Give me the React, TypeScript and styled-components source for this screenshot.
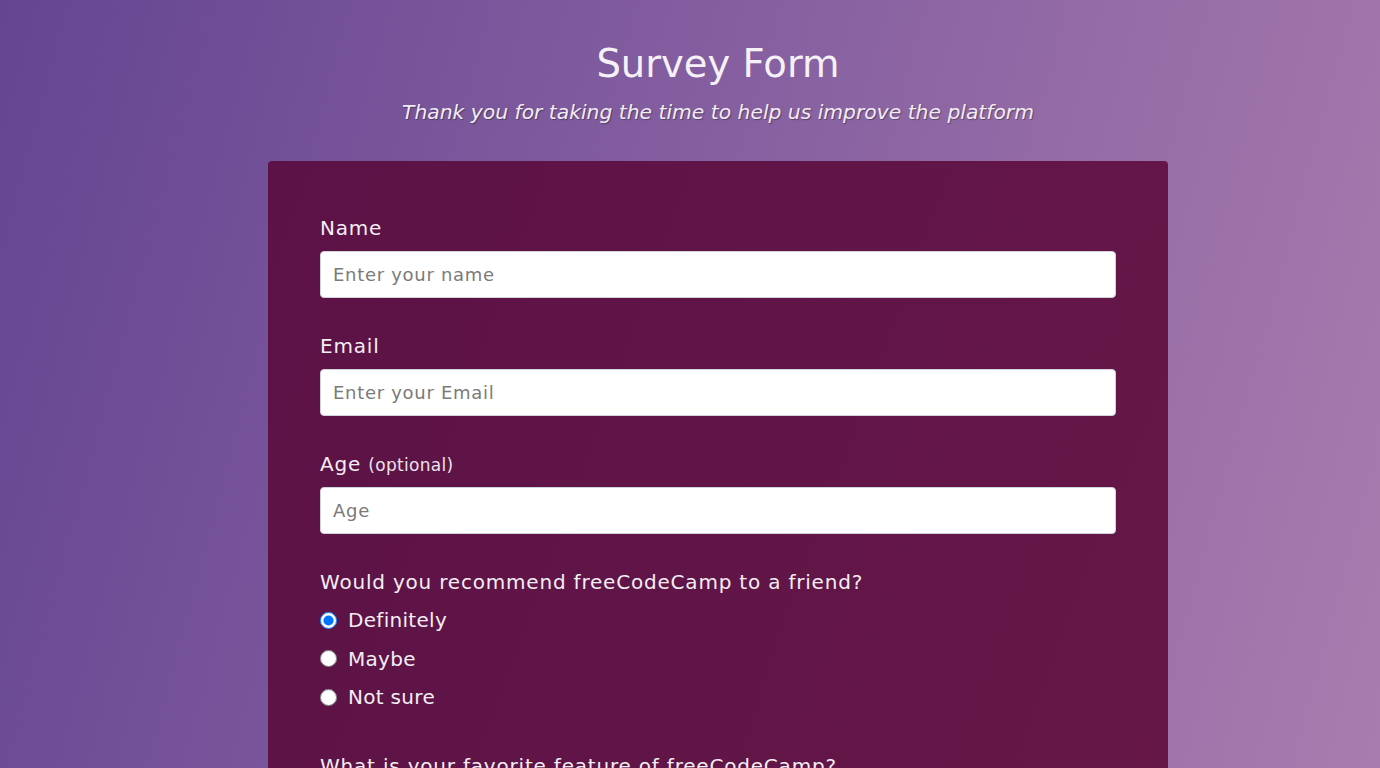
import styled, { createGlobalStyle } from 'styled-components';

const GlobalStyle = createGlobalStyle`
  html, body {
    margin: 0;
    padding: 0;
  }
  body {
    font-family: 'DejaVu Sans', 'Noto Sans', sans-serif;
    color: #f3f3f3;
    min-height: 100vh;
    background: linear-gradient(105deg, #654592 0%, #8a63a2 55%, #a97cae 100%);
    background-attachment: fixed;
  }
  * {
    box-sizing: border-box;
  }
`;

const Page = styled.main`
  display: flex;
  flex-direction: column;
  align-items: center;
  padding: 40px 0 40px 56px;
`;

const Header = styled.header`
  display: flex;
  flex-direction: column;
  align-items: center;
  margin-bottom: 37px;
`;

const Title = styled.h1`
  margin: 0;
  font-size: 38.5px;
  font-weight: 400;
  line-height: 48px;
  color: #f5f1f7;
`;

const Description = styled.p`
  margin: 12px 0 0;
  font-size: 20.3px;
  font-style: italic;
  font-weight: 300;
  color: #f1ecf3;
  text-shadow: 1px 1px 1px rgba(0, 0, 0, 0.35);
`;

const Card = styled.form`
  width: 900px;
  padding: 54px 52px 40px;
  border-radius: 4px;
  background: linear-gradient(110deg, #5c1246 0%, #661748 100%);
  display: flex;
  flex-direction: column;
`;

const Group = styled.div<{ $gap?: number }>`
  display: flex;
  flex-direction: column;
  margin-bottom: ${(p) => p.$gap ?? 35}px;
`;

const Label = styled.label`
  display: block;
  height: 27px;
  font-size: 20px;
  font-weight: 400;
  letter-spacing: 0.8px;
  line-height: 27px;
  margin-bottom: 9px;
  color: #f3eef4;
`;

const Hint = styled.span`
  font-size: 17px;
  line-height: 1;
  letter-spacing: 0.3px;
  color: #e9e2ea;
`;

const Input = styled.input`
  width: 100%;
  height: 47px;
  padding: 0 12px;
  border: 1px solid #ced4da;
  border-radius: 4px;
  font-family: inherit;
  font-size: 18px;
  letter-spacing: 0.7px;
  color: #495057;
  background: #fff;
  &::placeholder {
    color: #7a7a7a;
  }
`;

const Question = styled.p`
  margin: 0 0 5px;
  font-size: 20px;
  letter-spacing: 0.8px;
  line-height: 27px;
  color: #f3eef4;
`;

const RadioRow = styled.label`
  display: flex;
  align-items: center;
  gap: 11px;
  height: 38.5px;
  font-size: 20px;
  letter-spacing: 0.3px;
  color: #f3eef4;
`;

const Radio = styled.input`
  width: 17px;
  height: 17px;
  margin: 0;
`;

const options = ['Definitely', 'Maybe', 'Not sure'];

export default function App() {
  return (
    <>
      <GlobalStyle />
      <Page>
        <Header>
          <Title>Survey Form</Title>
          <Description>
            Thank you for taking the time to help us improve the platform
          </Description>
        </Header>
        <Card>
          <Group>
            <Label htmlFor="name">Name</Label>
            <Input id="name" type="text" placeholder="Enter your name" />
          </Group>
          <Group>
            <Label htmlFor="email">Email</Label>
            <Input id="email" type="email" placeholder="Enter your Email" />
          </Group>
          <Group>
            <Label htmlFor="age">
              Age <Hint>(optional)</Hint>
            </Label>
            <Input id="age" type="number" placeholder="Age" />
          </Group>
          <Group $gap={36}>
            <Question>Would you recommend freeCodeCamp to a friend?</Question>
            {options.map((o, i) => (
              <RadioRow key={o}>
                <Radio type="radio" name="recommend" defaultChecked={i === 0} />
                {o}
              </RadioRow>
            ))}
          </Group>
          <Group>
            <Question>What is your favorite feature of freeCodeCamp?</Question>
          </Group>
        </Card>
      </Page>
    </>
  );
}
